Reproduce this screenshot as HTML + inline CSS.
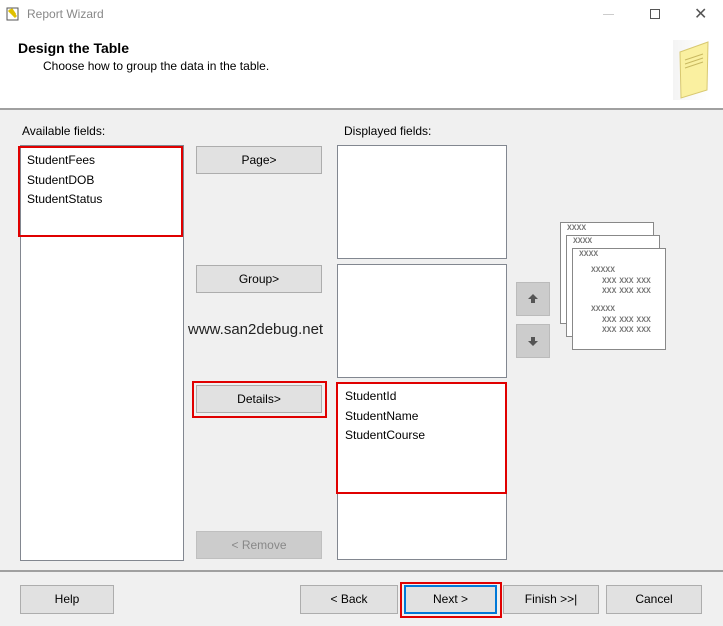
<!DOCTYPE html><html><head><style>
*{margin:0;padding:0;box-sizing:border-box}
body{width:723px;height:626px;background:#f0f0f0;font-family:"Segoe UI","Liberation Sans",sans-serif;font-size:12px;color:#000;position:relative;overflow:hidden}
.a{position:absolute}
.box{position:absolute;background:#fff;border:1px solid #828790}
.btn{position:absolute;background:#e1e1e1;border:1px solid #adadad;text-align:center;font-size:12px}
.red{position:absolute;border:2px solid #e00000}
.pg{position:absolute;background:#fff;border:1px solid #888}
.x{position:absolute;font-size:8px;color:#777;font-family:"Liberation Mono",monospace;letter-spacing:0px;font-weight:bold}
</style></head><body>
<div class="a" style="left:0;top:0;width:723px;height:109px;background:#fff"></div>
<div class="a" style="left:0;top:108px;width:723px;height:2px;background:#a0a0a0"></div>
<svg class="a" style="left:6px;top:7px" width="14" height="14"><rect x="1" y="1" width="11" height="12" fill="#fff" stroke="#555"/><path d="M3 3l7 7M5 2l4 6" stroke="#e0c000" stroke-width="3"/></svg>
<div class="a" style="left:27px;top:7px;color:#888;font-size:12px">Report Wizard</div>
<div class="a" style="left:603px;top:14px;width:11px;height:1px;background:#ccc"></div>
<div class="a" style="left:650px;top:9px;width:10px;height:10px;border:1px solid #555"></div>
<div class="a" style="left:694px;top:4px;font-size:16px;color:#555">✕</div>
<div class="a" style="left:18px;top:40px;font-weight:bold;font-size:14px">Design the Table</div>
<div class="a" style="left:43px;top:59px">Choose how to group the data in the table.</div>
<div class="a" style="left:673px;top:40px;width:38px;height:60px;background:linear-gradient(90deg,#f4f4f4,#fff)"></div>
<svg class="a" style="left:677px;top:40px" width="34" height="60"><path d="M3 12L31 2L30 50L4 58Z" fill="#faf0a0" stroke="#d8c870"/><path d="M8 20l18-6M8 24l18-6M8 28l18-6" stroke="#c8b860"/></svg>
<div class="a" style="left:22px;top:124px">Available fields:</div>
<div class="box" style="left:20px;top:145px;width:164px;height:416px"></div>
<div class="a" style="left:27px;top:151px;line-height:19.5px">StudentFees<br>StudentDOB<br>StudentStatus</div>
<div class="red" style="left:18px;top:146px;width:165px;height:91px"></div>
<div class="btn" style="left:196px;top:146px;width:126px;height:28px;line-height:26px">Page&gt;</div>
<div class="btn" style="left:196px;top:265px;width:126px;height:28px;line-height:26px">Group&gt;</div>
<div class="btn" style="left:196px;top:385px;width:126px;height:28px;line-height:26px">Details&gt;</div>
<div class="red" style="left:192px;top:381px;width:135px;height:37px"></div>
<div class="btn" style="left:196px;top:531px;width:126px;height:28px;line-height:26px;background:#cccccc;border-color:#bfbfbf;color:#888">&lt; Remove</div>
<div class="a" style="left:188px;top:321px;font-size:15px;color:#222;font-family:'Liberation Sans',sans-serif">www.san2debug.net</div>
<div class="a" style="left:344px;top:124px">Displayed fields:</div>
<div class="box" style="left:337px;top:145px;width:170px;height:114px"></div>
<div class="box" style="left:337px;top:264px;width:170px;height:114px"></div>
<div class="box" style="left:337px;top:383px;width:170px;height:177px"></div>
<div class="a" style="left:345px;top:387px;line-height:19.5px">StudentId<br>StudentName<br>StudentCourse</div>
<div class="red" style="left:336px;top:382px;width:171px;height:112px"></div>
<div class="btn" style="left:516px;top:282px;width:34px;height:34px;background:#ccc;border-color:#bbb"></div>
<svg class="a" style="left:526px;top:292px" width="14" height="14"><path d="M7 2L2 7h3v4h4V7h3z" fill="#555"/></svg>
<div class="btn" style="left:516px;top:324px;width:34px;height:34px;background:#ccc;border-color:#bbb"></div>
<svg class="a" style="left:526px;top:334px" width="14" height="14"><path d="M7 12L2 7h3V3h4v4h3z" fill="#555"/></svg>
<div class="pg" style="left:560px;top:222px;width:94px;height:102px"></div>
<div class="x" style="left:567px;top:224px">XXXX</div>
<div class="pg" style="left:566px;top:235px;width:94px;height:102px"></div>
<div class="x" style="left:573px;top:237px">XXXX</div>
<div class="pg" style="left:572px;top:248px;width:94px;height:102px"></div>
<div class="x" style="left:579px;top:250px">XXXX</div>
<div class="x" style="left:591px;top:266px">XXXXX</div>
<div class="x" style="left:602px;top:277px;word-spacing:-2px">XXX XXX XXX</div>
<div class="x" style="left:602px;top:287px;word-spacing:-2px">XXX XXX XXX</div>
<div class="x" style="left:591px;top:305px">XXXXX</div>
<div class="x" style="left:602px;top:316px;word-spacing:-2px">XXX XXX XXX</div>
<div class="x" style="left:602px;top:326px;word-spacing:-2px">XXX XXX XXX</div>
<div class="a" style="left:0;top:570px;width:723px;height:2px;background:#a0a0a0"></div>
<div class="btn" style="left:20px;top:585px;width:94px;height:29px;line-height:27px">Help</div>
<div class="btn" style="left:300px;top:585px;width:98px;height:29px;line-height:27px">&lt; Back</div>
<div class="btn" style="left:404px;top:585px;width:93px;height:29px;line-height:25px;border:2px solid #0078d7">Next &gt;</div>
<div class="red" style="left:400px;top:582px;width:102px;height:36px"></div>
<div class="btn" style="left:503px;top:585px;width:96px;height:29px;line-height:27px">Finish &gt;&gt;|</div>
<div class="btn" style="left:606px;top:585px;width:96px;height:29px;line-height:27px">Cancel</div>
</body></html>
